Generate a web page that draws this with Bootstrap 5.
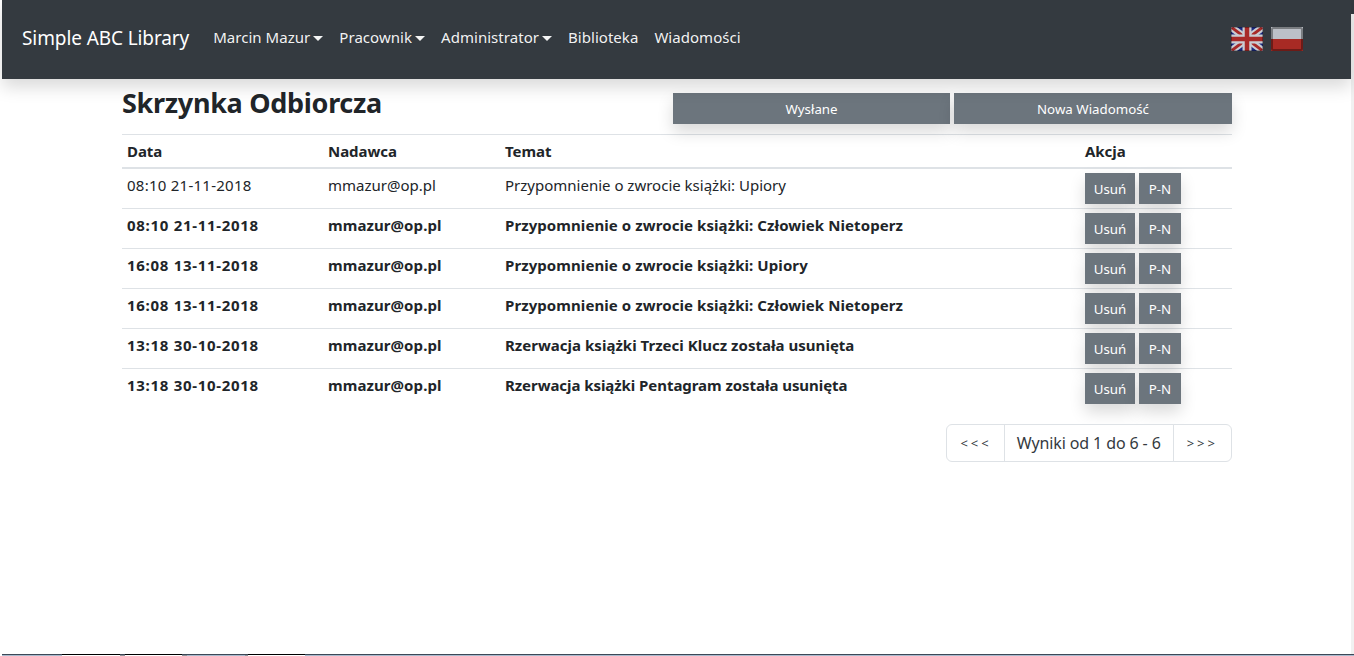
<!DOCTYPE html>
<html lang="pl">
<head>
<meta charset="utf-8">
<title>Skrzynka Odbiorcza</title>
<link rel="stylesheet" href="https://cdn.jsdelivr.net/npm/bootstrap@5.3.0/dist/css/bootstrap.min.css">
<style>
html,body{height:100%;overflow:hidden}
body{font-family:"Noto Sans","Open Sans",sans-serif;font-size:15px;color:#212529;background:#fff}
.page-shell{min-height:100vh}
.upper-area{min-height:0}
.left-area{min-width:0}
.side-rail{width:3px;flex:none;background:linear-gradient(#343a40 14px,#f1f1f1 14px)}
.top-bar{background:#343a40;height:79px;margin:0 0 0 2px;padding:0 16px 2px 20px;box-shadow:0 8px 16px rgba(0,0,0,.15);position:relative;z-index:2}
.top-bar .navbar-brand{font-size:19px;color:#fff;padding:0;margin-right:16px;letter-spacing:-.1px}
.top-bar .nav-link{color:rgba(255,255,255,.95);padding:7px 8px 9px;font-size:15px;letter-spacing:.04px}
.top-bar .dropdown-toggle::after{margin-left:3px;border-top-width:5px;border-left-width:5px;border-right-width:5px;vertical-align:2.5px}
.flag-set{gap:8px;margin-right:32px}
.content-wrap{width:1110px;margin:0 0 0 122px}
.page-title{font-size:27px;font-weight:700;margin:0;line-height:48px;letter-spacing:-.3px;height:55px}
.action-btn{background:#6c757d;color:#fff;border:0;border-radius:0;font-size:13.3px;height:31px;line-height:33px;padding:0;box-shadow:0 8px 16px rgba(0,0,0,.15);text-align:center}
.action-btn:hover{background:#6c757d;color:#fff}
.action-row{margin-top:14px}
.wide-btn{width:277px}
.wide-btn-last{width:278px}
.gap-4px{gap:4px}
.mail-table{margin:0;font-size:15px;table-layout:fixed}
.mail-table th,.mail-table td{padding:4px 5px 0;line-height:24px;vertical-align:top;border-top:1px solid #dee2e6;border-bottom:0}
.mail-table thead th{height:33px;vertical-align:middle;padding:0 5px;border-bottom:2px solid #dee2e6;letter-spacing:-.05px}
.mail-table tbody td{height:40px}
.mail-table tbody tr:first-child td{border-top:0;height:41px}
.mail-table tbody .row-new td{font-weight:700;letter-spacing:.08px}
.mail-table .cell-date{letter-spacing:.25px}
.mail-table tbody .row-new td.cell-date{letter-spacing:.7px}
.mail-table tbody .row-new td.subj-key{letter-spacing:.02px}
.mail-table tbody .row-new td.subj-penta{letter-spacing:-.06px}
.mail-table tbody .row-new td.cell-act{letter-spacing:0;font-weight:400}
.row-del{width:50px}
.row-pn{width:42px}
.pager-box{margin:15px 0 0;justify-content:flex-end;font-size:15px}
.pager-box .page-link{color:#343a40;padding:0 12px;height:38px;line-height:36px;border-color:#dee2e6;background:#fff}
.pager-box .pager-mid{letter-spacing:-.12px}
.pager-box .pager-arrow{font-size:13px;letter-spacing:3px;padding:0 12px 0 13px;line-height:37px}
.pager-box .pager-next{padding-right:13px}
.bottom-strip{height:2px;flex:none;margin-left:2px}
.strip-seg{height:2px;border-top:1px solid #000;background:#fff}
.strip-blue{border-top-color:#3d4857;background:#a9bacd}
.strip-tick{border-top-color:#3d4857;background:#8d9196}
.strip-a{width:60px}
.strip-b{width:58px}
.strip-c{width:5px}
.strip-d{width:57px}
.strip-e{width:3px}
</style>
</head>
<body>
<div class="page-shell d-flex flex-column">
<div class="upper-area d-flex flex-grow-1">
<div class="left-area d-flex flex-column flex-grow-1">
<nav class="top-bar navbar navbar-expand-lg navbar-dark flex-nowrap">
  <a class="navbar-brand" href="#">Simple ABC Library</a>
  <ul class="navbar-nav me-auto flex-row">
    <li class="nav-item dropdown"><a class="nav-link dropdown-toggle" href="#">Marcin Mazur</a></li>
    <li class="nav-item dropdown"><a class="nav-link dropdown-toggle" href="#">Pracownik</a></li>
    <li class="nav-item dropdown"><a class="nav-link dropdown-toggle" href="#">Administrator</a></li>
    <li class="nav-item"><a class="nav-link" href="#">Biblioteka</a></li>
    <li class="nav-item"><a class="nav-link" href="#">Wiadomości</a></li>
  </ul>
  <div class="d-flex flag-set">
    <svg width="32" height="24" viewBox="0 0 32 24" role="img" aria-label="English">
      <defs><clipPath id="fc"><rect width="32" height="24" rx="2"/></clipPath></defs>
      <g clip-path="url(#fc)">
        <rect width="32" height="24" fill="#1b2a80"/>
        <path d="M0 0L32 24M32 0L0 24" stroke="#c9ccd2" stroke-width="7"/>
        <path d="M0 0L32 24M32 0L0 24" stroke="#a82a28" stroke-width="3"/>
        <path d="M16 0V24M0 12H32" stroke="#c9ccd2" stroke-width="9"/>
        <path d="M16 0V24M0 12H32" stroke="#a82a28" stroke-width="4.5"/>
        <rect x=".5" y=".5" width="31" height="23" rx="2" fill="none" stroke="#000" stroke-opacity=".3"/>
      </g>
    </svg>
    <svg width="32" height="24" viewBox="0 0 32 24" role="img" aria-label="Polski">
      <rect width="32" height="12" y="0" fill="#bcc0c7"/>
      <rect width="32" height="12" y="12" fill="#a82a24"/>
      <rect x="1" y="1" width="30" height="22" rx="1.5" fill="none" stroke="#000" stroke-opacity=".35" stroke-width="2"/>
    </svg>
  </div>
</nav>
<main class="content-wrap flex-grow-1">
  <div class="d-flex justify-content-between align-items-start">
    <h1 class="page-title">Skrzynka Odbiorcza</h1>
    <div class="d-flex gap-4px action-row">
      <a class="btn action-btn wide-btn" href="#">Wysłane</a>
      <a class="btn action-btn wide-btn-last" href="#">Nowa Wiadomość</a>
    </div>
  </div>
  <table class="table mail-table">
    <colgroup><col style="width:201px"><col style="width:177px"><col style="width:580px"><col></colgroup>
    <thead><tr><th>Data</th><th>Nadawca</th><th>Temat</th><th>Akcja</th></tr></thead>
    <tbody>
      <tr><td class="cell-date">08:10 21-11-2018</td><td>mmazur@op.pl</td><td>Przypomnienie o zwrocie książki: Upiory</td><td class="cell-act"><div class="d-flex gap-4px"><a class="btn action-btn row-del" href="#">Usuń</a><a class="btn action-btn row-pn" href="#">P-N</a></div></td></tr>
      <tr class="row-new"><td class="cell-date">08:10 21-11-2018</td><td>mmazur@op.pl</td><td>Przypomnienie o zwrocie książki: Człowiek Nietoperz</td><td class="cell-act"><div class="d-flex gap-4px"><a class="btn action-btn row-del" href="#">Usuń</a><a class="btn action-btn row-pn" href="#">P-N</a></div></td></tr>
      <tr class="row-new"><td class="cell-date">16:08 13-11-2018</td><td>mmazur@op.pl</td><td>Przypomnienie o zwrocie książki: Upiory</td><td class="cell-act"><div class="d-flex gap-4px"><a class="btn action-btn row-del" href="#">Usuń</a><a class="btn action-btn row-pn" href="#">P-N</a></div></td></tr>
      <tr class="row-new"><td class="cell-date">16:08 13-11-2018</td><td>mmazur@op.pl</td><td>Przypomnienie o zwrocie książki: Człowiek Nietoperz</td><td class="cell-act"><div class="d-flex gap-4px"><a class="btn action-btn row-del" href="#">Usuń</a><a class="btn action-btn row-pn" href="#">P-N</a></div></td></tr>
      <tr class="row-new"><td class="cell-date">13:18 30-10-2018</td><td>mmazur@op.pl</td><td class="subj-key">Rzerwacja książki Trzeci Klucz została usunięta</td><td class="cell-act"><div class="d-flex gap-4px"><a class="btn action-btn row-del" href="#">Usuń</a><a class="btn action-btn row-pn" href="#">P-N</a></div></td></tr>
      <tr class="row-new"><td class="cell-date">13:18 30-10-2018</td><td>mmazur@op.pl</td><td class="subj-penta">Rzerwacja książki Pentagram została usunięta</td><td class="cell-act"><div class="d-flex gap-4px"><a class="btn action-btn row-del" href="#">Usuń</a><a class="btn action-btn row-pn" href="#">P-N</a></div></td></tr>
    </tbody>
  </table>
  <ul class="pagination pager-box">
    <li class="page-item"><a class="page-link pager-arrow" href="#">&lt;&lt;&lt;</a></li>
    <li class="page-item"><a class="page-link pager-mid" href="#">Wyniki od 1 do 6 - 6</a></li>
    <li class="page-item"><a class="page-link pager-arrow pager-next" href="#">&gt;&gt;&gt;</a></li>
  </ul>
</main>
</div>
<div class="side-rail"></div>
</div>
<div class="bottom-strip d-flex">
  <div class="strip-seg strip-blue strip-a"></div>
  <div class="strip-seg strip-b"></div>
  <div class="strip-seg strip-tick strip-c"></div>
  <div class="strip-seg strip-d"></div>
  <div class="strip-seg strip-tick strip-c"></div>
  <div class="strip-seg strip-blue strip-b"></div>
  <div class="strip-seg strip-tick strip-e"></div>
  <div class="strip-seg strip-d"></div>
  <div class="strip-seg strip-blue flex-grow-1"></div>
</div>
</div>
<script src="https://cdn.jsdelivr.net/npm/bootstrap@5.3.0/dist/js/bootstrap.bundle.min.js"></script>
</body>
</html>
